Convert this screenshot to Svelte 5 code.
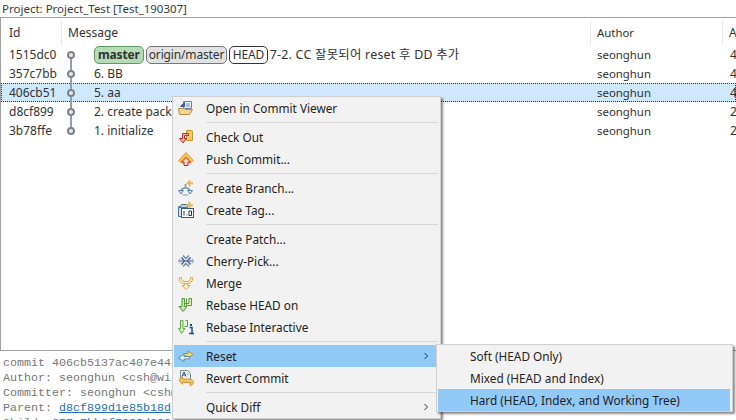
<script lang="ts">
    const commits = [
        { id: "1515dc0", msg: "7-2. CC 잘못되어 reset 후 DD 추가", age: "4", tags: true },
        { id: "357c7bb", msg: "6. BB", age: "4" },
        { id: "406cb51", msg: "5. aa", age: "4", selected: true },
        { id: "d8cf899", msg: "2. create package", age: "2" },
        { id: "3b78ffe", msg: "1. initialize", age: "2" },
    ];

    const menu = [
        [{ label: "Open in Commit Viewer", icon: "open" }],
        [
            { label: "Check Out", icon: "checkout" },
            { label: "Push Commit...", icon: "push" },
        ],
        [
            { label: "Create Branch...", icon: "branch" },
            { label: "Create Tag...", icon: "tag" },
        ],
        [
            { label: "Create Patch..." },
            { label: "Cherry-Pick...", icon: "cherry" },
            { label: "Merge", icon: "merge" },
            { label: "Rebase HEAD on", icon: "rebase" },
            { label: "Rebase Interactive", icon: "interactive" },
        ],
        [
            { label: "Reset", icon: "reset", sub: true, active: true },
            { label: "Revert Commit", icon: "revert" },
        ],
        [{ label: "Quick Diff", sub: true }],
    ];

    const resetModes = [
        { label: "Soft (HEAD Only)" },
        { label: "Mixed (HEAD and Index)" },
        { label: "Hard (HEAD, Index, and Working Tree)", active: true },
    ];
</script>

{#snippet icon(name)}
    <svg class="icon" viewBox="0 0 16 16" width="16" height="16" aria-hidden="true">
        {#if name === "open"}
            <path d="M5.500 1.500h8v7h-8z" fill="#e4ecf7" stroke="#6d83a8" />
            <path d="M2.500 6.500l4-4v4z" fill="#3c5a96" stroke="#3c5a96" />
            <path d="M8 4h4M8 6h4" stroke="#7f93b5" />
            <path d="M.5 8.500h6l1 1h7l-3 5h-10z" fill="#f5d596" stroke="#b98d45" />
        {:else if name === "checkout"}
            <path d="M8.500 1.500h5a1 1 0 0 1 1 1v9h-6z" fill="#f4cb62" stroke="#c4982f" />
            <path d="M4.500 4.500h6v2h-4v3h2l-3.500 4.500L1.500 9.500h3z" fill="#f6b3ac" stroke="#b5302a" />
        {:else if name === "push"}
            <path d="M.5 9.500L8 1.500l7.500 8-3 2.500h-9z" fill="#f6bf58" stroke="#e3a53a" />
            <path d="M8 6.500l4.500 4.500h-2.500v3.500H6V11H3.500z" fill="#fbd7cf" stroke="#c9281e" />
        {:else if name === "branch"}
            <path d="M7.500 4v3.500M3 9.500l4.500-2 4.500 2" fill="none" stroke="#6f94ad" stroke-width="1.500" />
            <path d="M.5 10.500h5l-2.500 3.500zM9.500 10.500h5L12 14z" fill="#d4e3ec" stroke="#5d87a3" />
            <path d="M4.500 15h6" stroke="#84a4b8" />
            <path d="M11.500 0v6.500M8.500 3.200h6.500" stroke="#e4b75b" stroke-width="2" />
        {:else if name === "tag"}
            <path d="M.5 4.500h2l1-2h6v3h-9z" fill="#bcd4e4" stroke="#4d7792" />
            <path d="M.5 5.500h3v9h-3z" fill="#cfe0ec" stroke="#4d7792" />
            <path d="M11.500 0v6.500M8.500 3.200h6.500" stroke="#e4b75b" stroke-width="2" />
            <rect x="3.500" y="6.500" width="12" height="9" fill="#fff" stroke="#35597a" />
            <path d="M6 9v4.500M8.500 13h1M11 9h2.500v4.500H11z" fill="none" stroke="#22344e" />
        {:else if name === "cherry"}
            <path d="M1 8h14" stroke="#3f5590" />
            <path d="M5 2.500l3 3 3-3M5 13.500l3-3 3 3" fill="none" stroke="#7388ad" stroke-width="1.500" />
            <path d="M3.500 4.500L6.500 8l-3 3.500M12.500 4.500L9.500 8l3 3.500" fill="none" stroke="#4f6595" stroke-width="1.500" />
            <path d="M2 5.500L.5 8 2 10.500M14 5.500L15.500 8 14 10.500" fill="none" stroke="#9aa9c4" />
        {:else if name === "merge"}
            <path d="M1.500 2.500h2v2l2.500 2h4l2.500-2v-2h2v3l-3.500 3h-6.500l-3.500-3z" fill="#fbeccb" stroke="#e2a93f" />
            <path d="M6.500 8.500v2H4l4 4 4-4H9.500v-2z" fill="#fbeccb" stroke="#e2a93f" />
        {:else if name === "rebase"}
            <path d="M5.500 1.500v8M8.500 1.500v5h-3" fill="none" stroke="#4f9a3f" stroke-width="1.100" />
            <path d="M11 1.500h2.500v7h-5V6.500H11z" fill="#e0efc0" stroke="#5b9c3d" />
            <path d="M4 1.500h2.500v8H9L5 14.500 1 9.500h3z" fill="#c9e6ab" stroke="#4f9a3f" />
        {:else if name === "interactive"}
            <path d="M7.500 1.500h2v6h-3" fill="none" stroke="#4f9a3f" />
            <path d="M2.500 1.500h2.500v8H7L3.500 14.500 0.500 9.500h2z" fill="#d4ecb8" stroke="#5fa84a" />
            <path d="M13 5v2" stroke="#14508e" stroke-width="2" />
            <path d="M11.500 8.500H14V14M11 14.500h5" fill="none" stroke="#14508e" stroke-width="1.500" />
        {:else if name === "reset"}
            <path d="M5.500 5.500h4.500V3l5 3.500-5 3.500V8H5.500z" fill="#f5db85" stroke="#ad8f35" />
            <path d="M11.500 8.500H6V6L.5 10 6 13.500V11h5.500z" fill="#e3f0f8" stroke="#5a8cb4" />
        {:else if name === "revert"}
            <path d="M2.500 .5h7l3 3v6h-10z" fill="#eef2f7" stroke="#7a8aa4" />
            <path d="M4 6.500L6 2l2 4.500M5 5h2" fill="none" stroke="#2f4f8a" />
            <path d="M9 4h2" stroke="#9aa9c4" />
            <path d="M1 10l3.500-3.500V9h6c3 0 5 1.500 5 3.500 0 1.500-1.500 3-3.500 3l.5-3H4.500v2z" fill="#f2c264" stroke="#cf9a36" />
        {/if}
    </svg>
{/snippet}

<div class="page">
    <div class="project">Project: Project_Test [Test_190307]</div>

    <div class="history">
        <div class="row head">
            <div class="cell id">Id</div>
            <div class="cell message">Message</div>
            <div class="cell author">Author</div>
            <div class="cell age">A</div>
        </div>
        <div class="rows">
            {#each commits as c, i}
                <div class="row" class:selected={c.selected}>
                    <div class="cell id">{c.id}</div>
                    <div class="cell message">
                        <span class="graph" class:first={i === 0} class:last={i === commits.length - 1}>
                            <span class="dot"></span>
                        </span>
                        {#if c.tags}
                            <span class="tag local">master</span>
                            <span class="tag remote">origin/master</span>
                            <span class="tag ref">HEAD</span>
                        {/if}
                        <span class="msg" class:wide={c.tags}>{c.msg}</span>
                    </div>
                    <div class="cell author">seonghun</div>
                    <div class="cell age">{c.age}</div>
                </div>
            {/each}
        </div>
    </div>

    <pre class="details">commit 406cb5137ac407e44a1c0b5d
Author: seonghun &lt;csh@wisestone.kr&gt;
Committer: seonghun &lt;csh@wisestone.kr&gt;
Parent: <span class="link">d8cf899d1e85b18d</span>
Child: <span class="link">357c7bb3f7992d220</span></pre>

    <div class="menu main">
        {#each menu as group, g}
            {#if g > 0}<div class="sep"></div>{/if}
            {#each group as item}
                <div class="item" class:active={item.active}>
                    <span class="slot">
                        {#if item.icon}{@render icon(item.icon)}{/if}
                    </span>
                    <span class="label">{item.label}</span>
                    {#if item.sub}
                        <svg class="arrow" viewBox="0 0 6 8" width="6" height="8" aria-hidden="true">
                            <path d="M1.500 1l3 3-3 3" fill="none" stroke="#333" />
                        </svg>
                    {/if}
                </div>
            {/each}
        {/each}
    </div>

    <div class="menu submenu">
        {#each resetModes as item}
            <div class="item" class:active={item.active}>
                <span class="label">{item.label}</span>
            </div>
        {/each}
    </div>
</div>

<style>
    :global(body) {
        margin: 0;
        background: #fff;
    }

    .page {
        position: relative;
        width: 736px;
        height: 420px;
        overflow: hidden;
        display: flex;
        flex-direction: column;
        background: #fff;
        color: #333;
        font-family: "Noto Sans", "Noto Sans CJK KR", sans-serif;
        font-size: 12px;
    }

    .project {
        height: 17px;
        line-height: 18px;
        padding-left: 2px;
        font-size: 11.5px;
        white-space: nowrap;
        color: #3a3a3a;
    }

    .history {
        height: 334px;
        box-sizing: border-box;
        border: 1px solid #a0a0a0;
        border-right: 0;
        flex: none;
        padding-top: 3px;
    }

    .row {
        display: grid;
        grid-template-columns: 60px 529px 132px 1fr;
        height: 19px;
        line-height: 19px;
        white-space: nowrap;
    }

    .head {
        height: 24px;
        line-height: 24px;
    }

    .head .cell + .cell {
        border-left: 1px solid #e8e8e8;
    }

    .cell {
        padding-left: 8px;
        overflow: hidden;
        box-sizing: border-box;
    }

    .head .cell {
        padding-left: 6px;
    }

    .head .id {
        padding-left: 8px;
    }

    .author {
        padding-left: 7px;
        font-size: 11.4px;
    }

    .message {
        position: relative;
        display: flex;
        align-items: center;
        padding-left: 33px;
        gap: 2px;
    }

    .selected {
        background: #cde8ff;
        outline: 1px dotted #333;
        outline-offset: -1px;
    }

    .graph {
        position: absolute;
        left: 6px;
        top: 0;
        bottom: 0;
        width: 8px;
    }

    .graph::before {
        content: "";
        position: absolute;
        left: 3px;
        top: 0;
        bottom: 0;
        width: 2px;
        background: #8f9fb0;
    }

    .graph.first::before {
        top: 9px;
    }

    .graph.last::before {
        bottom: 9px;
    }

    .dot {
        position: absolute;
        left: 0;
        top: 6px;
        width: 4px;
        height: 4px;
        border: 2px solid #7d8489;
        border-radius: 50%;
        background: #e8e8e8;
    }

    .tag {
        box-sizing: border-box;
        height: 18px;
        line-height: 15px;
        padding: 0 2px;
        border: 1px solid #333;
        border-radius: 5px;
        letter-spacing: -0.15px;
    }

    .local {
        padding: 0 3px;
        font-weight: 700;
        background: #b5dcb6;
        border-color: #5f9a63;
    }

    .remote {
        background: #e2e2e2;
        border-color: #777;
    }

    .ref {
        padding: 0 2.500px;
        background: #fff;
    }

    .msg.wide {
        font-size: 12.4px;
        letter-spacing: 0.25px;
    }

    .details {
        flex: 1;
        margin: 0;
        padding: 5px 0 0 3px;
        overflow: hidden;
        font-family: "Liberation Mono", "DejaVu Sans Mono", monospace;
        font-size: 11.67px;
        line-height: 15px;
        color: #777;
    }

    .link {
        color: #1f6fb0;
        text-decoration: underline;
    }

    .menu {
        position: absolute;
        box-sizing: border-box;
        background: #f2f2f2;
        border: 1px solid #d0d0d0;
        box-shadow: 2px 2px 2px rgba(0, 0, 0, 0.45);
        padding: 0 1px;
        color: #222;
        font-size: 11.8px;
    }

    .main {
        left: 172px;
        top: 96px;
        width: 269px;
    }

    .submenu {
        left: 436px;
        top: 344px;
        width: 297px;
        padding: 0 2px 0 1px;
    }

    .item {
        display: flex;
        align-items: center;
        height: 22px;
    }

    .item.active {
        background: #91c9f7;
    }

    .slot {
        display: flex;
        justify-content: center;
        flex: none;
        width: 24px;
        margin-right: 8px;
    }

    .submenu .label {
        padding-left: 32px;
    }

    .icon {
        display: block;
    }

    .label {
        flex: 1;
        white-space: nowrap;
    }

    .arrow {
        margin-right: 10px;
    }

    .sep {
        height: 1px;
        margin: 3px 1px 3px 32px;
        background: #d8d8d8;
    }
</style>
